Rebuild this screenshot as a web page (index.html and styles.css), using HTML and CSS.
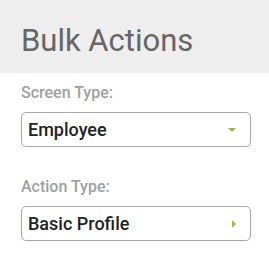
FILE: index.html
```html
<!DOCTYPE html>
<html lang="en">
<head>
  <meta charset="UTF-8">
  <title>Bulk Actions</title>
  <link rel="stylesheet" href="styles.css">
</head>
<body>
  <div class="panel-head">
    <h1 class="panel-title">Bulk Actions</h1>
  </div>

  <div class="panel-body">
    <!-- screen type -->
    <div class="field">
      <div class="field-label">Screen Type:</div>
      <div class="select">
        <span class="select-value">Employee</span>
        <svg class="select-arrow" width="8" height="4" viewBox="0 0 8 4"><path d="M0 0h8L4 4z" fill="#8bc34a"/></svg>
      </div>
    </div>

    <!-- action type -->
    <div class="field">
      <div class="field-label">Action Type:</div>
      <div class="select">
        <span class="select-value">Basic Profile</span>
        <svg class="select-arrow" width="4" height="8" viewBox="0 0 4 8"><path d="M0 0v8l4-4z" fill="#8bc34a"/></svg>
      </div>
    </div>
  </div>
</body>
</html>
```

FILE: styles.css
```css
* { margin:0; padding:0; box-sizing:border-box; }
body { font-family: Roboto, "Liberation Sans", sans-serif; background:#fff; }

/* header strip */
.panel-head {
  background: #eeeeee;
  height: 73px;
  padding: 23px 0 0 21px;
}
.panel-title {
  font-size: 31px;
  font-weight: 400;
  line-height: 36px;
  color: #666;
}

/* form */
.panel-body {
  padding: 0 18px 0 21px;
}
.field { margin-top: 10px; }
.field + .field { margin-top: 30px; }
.field-label {
  font-size: 16px;
  font-weight: 500;
  line-height: 19px;
  color: #a0a0a0;
  margin-bottom: 10px;
}
.select {
  display: flex;
  align-items: center;
  justify-content: space-between;
  height: 35px;
  border: 1px solid #a8a8a8;
  border-radius: 5px;
  padding: 0 14px 0 6px;
}
.select-value {
  font-size: 18px;
  font-weight: 500;
  line-height: 21px;
  color: #222;
}
```
